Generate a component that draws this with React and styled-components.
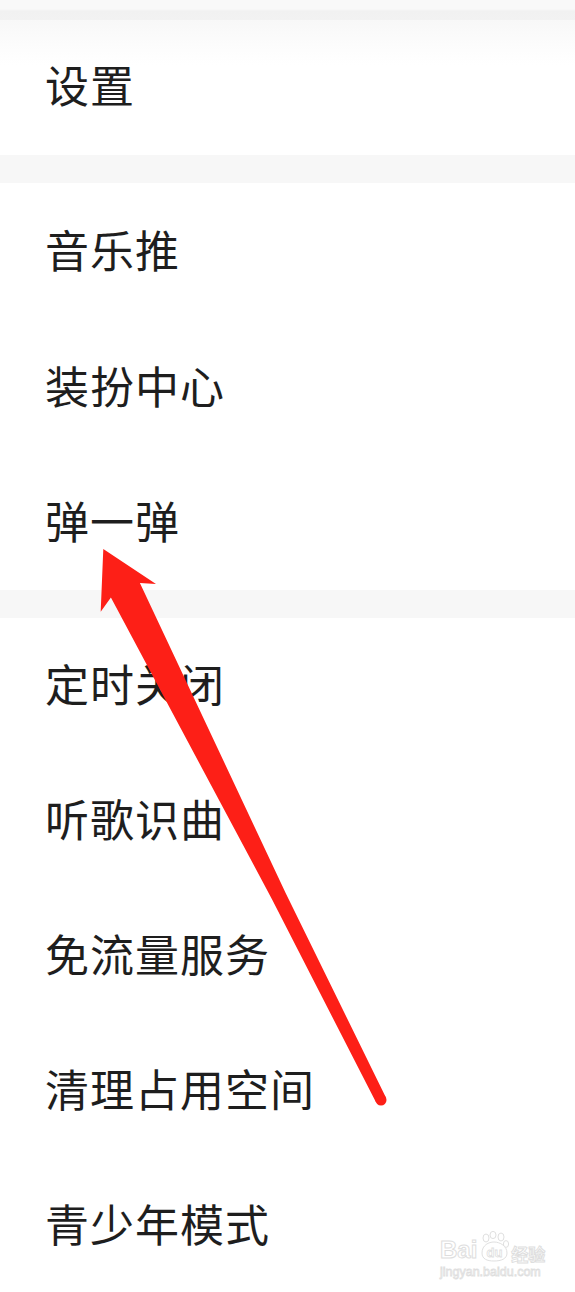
import React from 'react'
import styled, { createGlobalStyle } from 'styled-components'

const GlobalStyle = createGlobalStyle`
  html, body {
    margin: 0;
    padding: 0;
    background: #ffffff;
  }
  body {
    font-family: "Noto Sans CJK SC", "Noto Sans", sans-serif;
  }
`

const sections = [
  { rows: ['设置'], height: 135 },
  { rows: ['音乐推', '装扮中心', '弹一弹'], height: 407 },
  { rows: ['定时关闭', '听歌识曲', '免流量服务', '清理占用空间', '青少年模式'], height: 674 },
]

export default function App() {
  return (
    <>
      <GlobalStyle />
      <Page>
        <TopStrip />
        {sections.map((section, i) => (
          <React.Fragment key={i}>
            {i > 0 && <Divider />}
            <Card $h={section.height} $first={i === 0}>
              {section.rows.map((label) => (
                <Row key={label} $lift={i === 0 ? 8 : 4}>
                  <Label>{label}</Label>
                </Row>
              ))}
            </Card>
          </React.Fragment>
        ))}
        <Arrow viewBox="0 0 575 1292" width="575" height="1292">
          <polygon
            fill="#fd1f17"
            points="103.3,549 156,584 139.9,583 285.5,892.7 385.9,1097.5 376.1,1102.5 272.1,899.5 110.9,597.6 100.7,611.7"
          />
          <circle cx="381" cy="1100" r="5.5" fill="#fd1f17" />
        </Arrow>
        <Watermark>
          <LogoLine>
            <Brand>Bai</Brand>
            <svg width="34" height="32" viewBox="0 0 34 32">
              <g fill="#fff" stroke="#e0e0e0" strokeWidth="1">
                <ellipse cx="9" cy="7" rx="3" ry="4" />
                <ellipse cx="16" cy="4" rx="3" ry="3.6" />
                <ellipse cx="24" cy="6" rx="3" ry="4" />
                <ellipse cx="29" cy="13" rx="2.6" ry="3.4" />
                <path d="M5 22 C5 14 12 11 17 11 C23 11 30 15 30 22 C30 28 24 30 17 30 C10 30 5 28 5 22 Z" />
              </g>
              <text x="17.5" y="26" textAnchor="middle" fontFamily="Liberation Sans, sans-serif" fontWeight="700" fontSize="13" fill="#fff" stroke="#e0e0e0" strokeWidth="0.8">du</text>
            </svg>
            <Brand $cjk>经验</Brand>
          </LogoLine>
          <Site>jingyan.baidu.com</Site>
        </Watermark>
      </Page>
    </>
  )
}

const Page = styled.div`
  position: relative;
  width: 575px;
  height: 1292px;
  overflow: hidden;
  background: #ffffff;
`

const TopStrip = styled.div`
  height: 20px;
  background: linear-gradient(#f9f9f9 0, #f9f9f9 9px, #f1f1f1 11px, #f2f2f2 20px);
`

const Divider = styled.div`
  height: 28px;
  background: #f7f7f7;
`

const Card = styled.div`
  height: ${(p) => p.$h}px;
  display: flex;
  flex-direction: column;
  background: ${(p) =>
    p.$first ? 'linear-gradient(#f8f8f8 0, #fdfdfd 30px, #ffffff 45px)' : '#ffffff'};
`

const Row = styled.div`
  flex: 1;
  display: flex;
  align-items: center;
  padding-left: 45px;
  padding-bottom: ${(p) => p.$lift}px;
`

const Label = styled.span`
  font-size: 44px;
  line-height: 1;
  color: #1e1e1e;
  letter-spacing: 1px;
`

const Arrow = styled.svg`
  position: absolute;
  left: 0;
  top: 0;
  pointer-events: none;
`

const Watermark = styled.div`
  position: absolute;
  left: 440px;
  top: 1231px;
  display: flex;
  flex-direction: column;
  align-items: flex-start;
  color: #ffffff;
`

const LogoLine = styled.div`
  display: flex;
  align-items: flex-end;
  height: 32px;
`

const Brand = styled.span`
  font-family: ${(p) => (p.$cjk ? '"Noto Sans CJK SC", sans-serif' : '"Liberation Sans", sans-serif')};
  font-weight: 700;
  font-size: ${(p) => (p.$cjk ? '17px' : '24px')};
  line-height: 1;
  color: #ffffff;
  -webkit-text-stroke: 1px #dedede;
  margin-bottom: 1px;
`

const Site = styled.span`
  font-family: "Liberation Sans", sans-serif;
  font-size: 12.5px;
  line-height: 1;
  margin-top: 3px;
  color: #ffffff;
  -webkit-text-stroke: 0.8px #dedede;
`
